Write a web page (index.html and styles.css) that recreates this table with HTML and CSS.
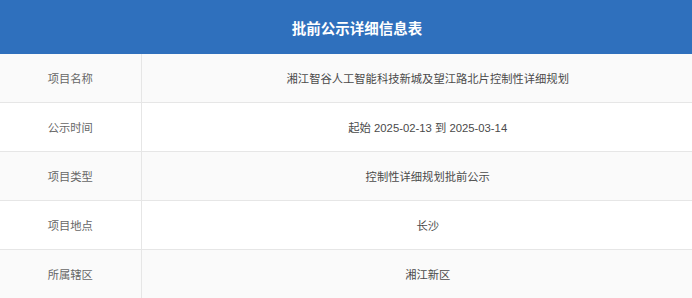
FILE: index.html
```html
<!DOCTYPE html>
<html lang="zh-CN">
<head>
<meta charset="utf-8">
<title>批前公示详细信息表</title>
<link rel="stylesheet" href="styles.css">
</head>
<body>
<table class="info-table">
  <colgroup>
    <col class="col-label">
    <col class="col-value">
  </colgroup>
  <thead>
    <tr><th colspan="2" class="title">批前公示详细信息表</th></tr>
  </thead>
  <tbody>
    <tr><td class="label">项目名称</td><td class="value">湘江智谷人工智能科技新城及望江路北片控制性详细规划</td></tr>
    <tr><td class="label">公示时间</td><td class="value">起始 2025-02-13 到 2025-03-14</td></tr>
    <tr><td class="label">项目类型</td><td class="value">控制性详细规划批前公示</td></tr>
    <tr><td class="label">项目地点</td><td class="value">长沙</td></tr>
    <tr><td class="label">所属辖区</td><td class="value">湘江新区</td></tr>
  </tbody>
</table>
</body>
</html>
```
FILE: styles.css
```css
html, body {
  margin: 0;
  padding: 0;
  background: #ffffff;
  overflow: hidden;
}
body {
  font-family: "Liberation Sans", "Noto Sans CJK SC", sans-serif;
  font-size: 11.3px;
}
.info-table {
  width: 714px;
  border-collapse: collapse;
  table-layout: fixed;
}
.col-label {
  width: 141px;
}
.title {
  height: 54px;
  padding: 0;
  background: #2f70bd;
  color: #ffffff;
  font-size: 14.5px;
  font-weight: bold;
  text-align: center;
  vertical-align: middle;
}
.info-table td {
  height: 48px;
  padding: 0;
  text-align: center;
  vertical-align: middle;
  border-bottom: 1px solid #e6e6e6;
}
.info-table tbody tr:nth-child(odd) td {
  background: #fafafa;
}
.info-table tbody tr:nth-child(even) td {
  background: #ffffff;
}
.label {
  color: #666666;
  border-right: 1px solid #e6e6e6;
}
.value {
  color: #4a4a4a;
}
```
